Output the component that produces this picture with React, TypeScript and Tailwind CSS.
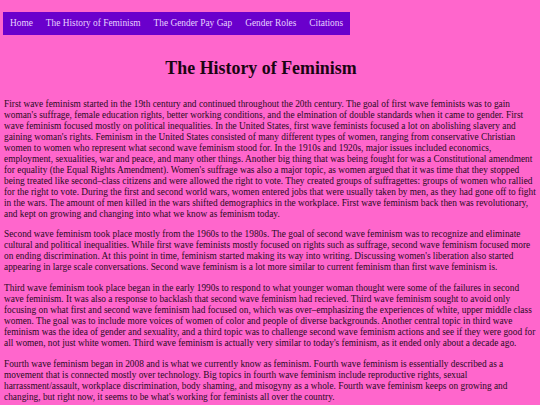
const links = ['Home', 'The History of Feminism', 'The Gender Pay Gap', 'Gender Roles', 'Citations'];

const paragraphs = [
  "First wave feminism started in the 19th century and continued throughout the 20th century. The goal of first wave feminists was to gain woman's suffrage, female education rights, better working conditions, and the elmination of double standards when it came to gender. First wave feminism focused mostly on political inequalities. In the United States, first wave feminists focused a lot on abolishing slavery and gaining woman's rights. Feminism in the United States consisted of many different types of women, ranging from conservative Christian women to women who represent what second wave feminism stood for. In the 1910s and 1920s, major issues included economics, employment, sexualities, war and peace, and many other things. Another big thing that was being fought for was a Constitutional amendment for equality (the Equal Rights Amendment). Women's suffrage was also a major topic, as women argued that it was time that they stopped being treated like second–class citizens and were allowed the right to vote. They created groups of suffragettes: groups of women who rallied for the right to vote. During the first and second world wars, women entered jobs that were usually taken by men, as they had gone off to fight in the wars. The amount of men killed in the wars shifted demographics in the workplace. First wave feminism back then was revolutionary, and kept on growing and changing into what we know as feminism today.",
  "Second wave feminism took place mostly from the 1960s to the 1980s. The goal of second wave feminism was to recognize and eliminate cultural and political inequalities. While first wave feminists mostly focused on rights such as suffrage, second wave feminism focused more on ending discrimination. At this point in time, feminism started making its way into writing. Discussing women's liberation also started appearing in large scale conversations. Second wave feminism is a lot more similar to current feminism than first wave feminism is.",
  "Third wave feminism took place began in the early 1990s to respond to what younger woman thought were some of the failures in second wave feminism. It was also a response to backlash that second wave feminism had recieved. Third wave feminism sought to avoid only focusing on what first and second wave feminism had focused on, which was over–emphasizing the experiences of white, upper middle class women. The goal was to include more voices of women of color and people of diverse backgrounds. Another central topic in third wave feminism was the idea of gender and sexuality, and a third topic was to challenge second wave feminism actions and see if they were good for all women, not just white women. Third wave feminism is actually very similar to today's feminism, as it ended only about a decade ago.",
  "Fourth wave feminism began in 2008 and is what we currently know as feminism. Fourth wave feminism is essentially described as a movement that is connected mostly over technology. Big topics in fourth wave feminism include reproductive rights, sexual harrassment/assault, workplace discrimination, body shaming, and misogyny as a whole. Fourth wave feminism keeps on growing and changing, but right now, it seems to be what's working for feminists all over the country.",
];

export default function App() {
  return (
    <div className="min-h-[405px] bg-[#ff66cc] px-[4px] pt-[12px] pb-4 text-[#2b0a24] font-['Liberation_Serif','Times_New_Roman',serif]">
      <nav className="flex w-fit ml-[-1px] bg-[#6a00cc] h-[23px] items-center px-[0.5px]">
        {links.map(l => (
          <a key={l} href="#" className="px-[6.5px] text-[9.35px] leading-[11px] text-[#e8d0ff]">{l}</a>
        ))}
      </nav>

      <h1 className="text-center font-bold text-[17.9px] leading-[21px] mt-[23px] mb-[20px] pr-[18px] text-[#1a0512]">The History of Feminism</h1>

      <div className="space-y-[10px]">
        {paragraphs.map((p, i) => (
          <p key={i} className="text-[9.35px] leading-[10.95px]">{p}</p>
        ))}
      </div>
    </div>
  );
}
